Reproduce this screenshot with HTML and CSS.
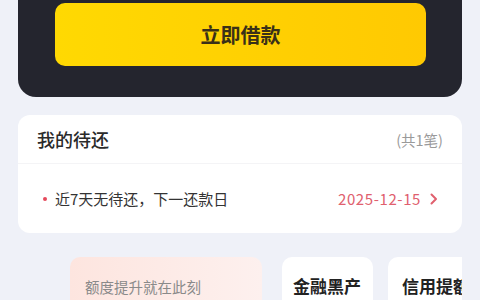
FILE: index.html
```html
<!DOCTYPE html>
<html lang="zh-CN">
<head>
  <meta charset="UTF-8" />
  <meta name="viewport" content="width=device-width, initial-scale=1.0" />
  <title>借款</title>
  <link rel="stylesheet" href="styles.css">
</head>
<body>
  <div class="hero">
    <button class="loan-btn">立即借款</button>
  </div>

  <div class="repay">
    <div class="repay-head">
      <span class="repay-title">我的待还</span>
      <span class="repay-count">(共1笔)</span>
    </div>
    <div class="repay-row">
      <span class="dot"></span>
      <span class="repay-text">近7天无待还，下一还款日</span>
      <span class="repay-date">2025-12-15</span>
      <svg class="chevron" width="8" height="12" viewBox="0 0 8 12">
        <path d="M1.5 1.5 L6 6 L1.5 10.5" fill="none" stroke="#e0606e" stroke-width="2" stroke-linecap="round" stroke-linejoin="round"/>
      </svg>
    </div>
  </div>

  <div class="promo">
    <div class="promo-main">额度提升就在此刻</div>
    <div class="promo-tile first">金融黑产</div>
    <div class="promo-tile second">信用提额</div>
  </div>
</body>
</html>
```

FILE: styles.css
```css
body {
  margin: 0;
  background: #eff1f8;
  font-family: "Noto Sans CJK SC", "Noto Sans", sans-serif;
  height: 300px;
  overflow: hidden;
}
.hero {
  margin: 0 18px;
  background: #24252e;
  border-radius: 0 0 18px 18px;
  padding: 3px 36px 31px 37px;
}
.loan-btn {
  display: block;
  width: 100%;
  height: 63px;
  border: none;
  border-radius: 10px;
  background: linear-gradient(90deg, #ffd902, #ffc902);
  color: #3a3018;
  font-family: inherit;
  font-size: 20px;
  font-weight: bold;
}
.repay {
  margin: 18px 18px 0;
  background: #fff;
  border-radius: 12px;
}
.repay-head {
  height: 48px;
  display: flex;
  align-items: center;
  justify-content: space-between;
  padding: 0 19px;
  border-bottom: 1px solid #f4f4f6;
}
.repay-title {
  font-size: 18px;
  font-weight: 500;
  color: #2a2a2a;
}
.repay-count {
  font-size: 14.5px;
  color: #9a9a9a;
}
.repay-row {
  height: 69px;
  display: flex;
  align-items: center;
  padding: 0 24px 0 25px;
}
.dot {
  width: 4px;
  height: 4px;
  border-radius: 50%;
  background: #e5495b;
  margin-right: 8px;
}
.repay-text {
  font-size: 15px;
  color: #333;
  flex: 1;
}
.repay-date {
  font-size: 15px;
  letter-spacing: 0.6px;
  color: #e0606e;
  margin-right: 9px;
}
.promo {
  margin: 24px 18px 0;
  padding-left: 52px;
  display: flex;
  overflow: hidden;
}
.promo-main {
  flex: none;
  width: 177px;
  height: 60px;
  padding: 19px 0 0 15px;
  border-radius: 10px;
  background: linear-gradient(90deg, #fde5df, #fdf0ee);
  font-size: 14.5px;
  color: #8a8a8a;
}
.promo-tile {
  flex: none;
  width: 91px;
  height: 60px;
  box-sizing: border-box;
  padding-top: 16px;
  border-radius: 10px;
  background: #fff;
  font-size: 17px;
  font-weight: bold;
  color: #222;
}
.promo-tile.first {
  margin-left: 20px;
  padding-left: 11px;
}
.promo-tile.second {
  margin-left: 15px;
  padding-left: 14px;
}
```
